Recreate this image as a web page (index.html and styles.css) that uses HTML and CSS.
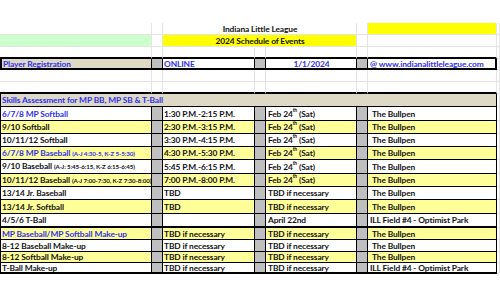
FILE: index.html
```html
<!DOCTYPE html>
<html>
<head>
<meta charset="utf-8">
<link rel="stylesheet" href="styles.css">
</head>
<body>
<div class="sheet">
  <div class="row h12">
    <div class="c"></div><div class="c"></div><div class="c sp-ce center">Indiana Little League</div><div class="c"></div><div class="c yel"></div><div class="c h"></div>
  </div>
  <div class="row h12">
    <div class="c grn"></div><div class="c"></div><div class="c sp-ce yel center">2024 Schedule of Events</div><div class="c"></div><div class="c"></div><div class="c h"></div>
  </div>
  <div class="row h12 thick-below">
    <div class="c"></div><div class="c"></div><div class="c"></div><div class="c"></div><div class="c"></div><div class="c"></div><div class="c"></div><div class="c h"></div>
  </div>
  <div class="row h11 reg thick-below">
    <div class="c tan blue first">Player Registration</div><div class="c gry"></div><div class="c blue">ONLINE</div><div class="c gry"></div><div class="c blue center">1/1/2024</div><div class="c gry"></div><div class="c blue loc last">@ www.indianalittleleague.com</div><div class="c h"></div>
  </div>
  <div class="row h12">
    <div class="c"></div><div class="c"></div><div class="c"></div><div class="c"></div><div class="c"></div><div class="c"></div><div class="c"></div><div class="c h"></div>
  </div>
  <div class="row h12 thick-below">
    <div class="c"></div><div class="c"></div><div class="c"></div><div class="c"></div><div class="c"></div><div class="c"></div><div class="c"></div><div class="c h"></div>
  </div>
  <div class="row h13 data">
    <div class="c sp-all tan blue first last">Skills Assessment for MP BB, MP SB &amp; T-Ball</div><div class="c h"></div>
  </div>

  <div class="row h14 data">
    <div class="c blue first">6/7/8 MP Softball</div><div class="c gry"></div><div class="c">1:30 P.M.-2:15 P.M.</div><div class="c gry"></div><div class="c dt"><span>Feb 24<sup>th</sup> (Sat)</span></div><div class="c gry"></div><div class="c loc ind last">The Bullpen</div><div class="c h"></div>
  </div>
  <div class="row h13 data ly">
    <div class="c first">9/10 Softball</div><div class="c gry"></div><div class="c">2:30 P.M.-3:15 P.M.</div><div class="c gry"></div><div class="c dt"><span>Feb 24<sup>th</sup> (Sat)</span></div><div class="c gry"></div><div class="c loc ind last">The Bullpen</div><div class="c h"></div>
  </div>
  <div class="row h13 data">
    <div class="c first">10/11/12 Softball</div><div class="c gry"></div><div class="c">3:30 P.M.-4:15 P.M.</div><div class="c gry"></div><div class="c dt"><span>Feb 24<sup>th</sup> (Sat)</span></div><div class="c gry"></div><div class="c loc ind last">The Bullpen</div><div class="c h"></div>
  </div>
  <div class="row h13 data ly">
    <div class="c blue first"><span>6/7/8 MP Baseball <small>(A-J 4:30-5, K-Z 5-5:30)</small></span></div><div class="c gry"></div><div class="c">4:30 P.M.-5:30 P.M.</div><div class="c gry"></div><div class="c dt"><span>Feb 24<sup>th</sup> (Sat)</span></div><div class="c gry"></div><div class="c loc ind last">The Bullpen</div><div class="c h"></div>
  </div>
  <div class="row h14 data">
    <div class="c first"><span>9/10 Baseball <small>(A-J: 5:45-6:15, K-Z 6:15-6:45)</small></span></div><div class="c gry"></div><div class="c">5:45 P.M.-6:15 P.M.</div><div class="c gry"></div><div class="c dt"><span>Feb 24<sup>th</sup> (Sat)</span></div><div class="c gry"></div><div class="c loc ind last">The Bullpen</div><div class="c h"></div>
  </div>
  <div class="row h13 data ly">
    <div class="c first"><span>10/11/12 Baseball <small>(A-J 7:00-7:30, K-Z 7:30-8:00)</small></span></div><div class="c gry"></div><div class="c">7:00 P.M.-8:00 P.M.</div><div class="c gry"></div><div class="c dt"><span>Feb 24<sup>th</sup> (Sat)</span></div><div class="c gry"></div><div class="c loc ind last">The Bullpen</div><div class="c h"></div>
  </div>
  <div class="row h13 data">
    <div class="c first">13/14 Jr. Baseball</div><div class="c gry"></div><div class="c">TBD</div><div class="c gry"></div><div class="c dt">TBD if necessary</div><div class="c gry"></div><div class="c loc ind last">The Bullpen</div><div class="c h"></div>
  </div>
  <div class="row h14 data ly">
    <div class="c first">13/14 Jr. Softball</div><div class="c gry"></div><div class="c">TBD</div><div class="c gry"></div><div class="c dt">TBD if necessary</div><div class="c gry"></div><div class="c loc ind last">The Bullpen</div><div class="c h"></div>
  </div>
  <div class="row h14 data thick-below">
    <div class="c first">4/5/6 T-Ball</div><div class="c gry"></div><div class="c"></div><div class="c gry"></div><div class="c dt">April 22nd</div><div class="c gry"></div><div class="c loc last">ILL Field #4 - Optimist Park</div><div class="c h"></div>
  </div>
  <div class="row h12 data ly">
    <div class="c blue first">MP Baseball/MP Softball Make-up</div><div class="c gry"></div><div class="c">TBD if necessary</div><div class="c gry"></div><div class="c dt">TBD if necessary</div><div class="c gry"></div><div class="c loc ind last">The Bullpen</div><div class="c h"></div>
  </div>
  <div class="row h12 data">
    <div class="c first">8-12 Baseball Make-up</div><div class="c gry"></div><div class="c">TBD if necessary</div><div class="c gry"></div><div class="c dt">TBD if necessary</div><div class="c gry"></div><div class="c loc ind last">The Bullpen</div><div class="c h"></div>
  </div>
  <div class="row h11 data ly">
    <div class="c first">8-12 Softball Make-up</div><div class="c gry"></div><div class="c">TBD if necessary</div><div class="c gry"></div><div class="c dt">TBD if necessary</div><div class="c gry"></div><div class="c loc ind last">The Bullpen</div><div class="c h"></div>
  </div>
  <div class="row h11 data thick-below">
    <div class="c first">T-Ball Make-up</div><div class="c gry"></div><div class="c">TBD if necessary</div><div class="c gry"></div><div class="c dt">TBD if necessary</div><div class="c gry"></div><div class="c loc last">ILL Field #4 - Optimist Park</div><div class="c h"></div>
  </div>
</div>
</body>
</html>
```
FILE: styles.css
```css
html, body {
  margin: 0;
  padding: 0;
  background: #ffffff;
}
body {
  font-family: Lato, "Liberation Sans", sans-serif;
  font-weight: 700;
  font-size: 8.4px;
  letter-spacing: -0.12px;
  color: #111111;
}
.sheet {
  display: flex;
  flex-direction: column;
  padding-top: 23px;
  width: 500px;
}
.row {
  display: grid;
  grid-template-columns: 152px 11px 92px 11px 91px 11px 129px 1fr;
}
.h11 { height: 11px; }
.h12 { height: 12px; }
.h13 { height: 13px; }
.h14 { height: 14px; }

.c {
  box-sizing: border-box;
  border-right: 1px solid #e4e4e4;
  border-bottom: 1px solid #e4e4e4;
  display: flex;
  align-items: center;
  padding: 0 0 0 1px;
  white-space: nowrap;
  overflow: hidden;
  line-height: 10px;
}
.sp-ce { grid-column: 3 / 6; }
.sp-all { grid-column: 1 / 8; }
.center { justify-content: center; }

.yel { background: #ffff00; }
.grn { background: #ccffcc; }
.tan { background: #ddd9c4; }
.gry { background: #bfbfbf; }
.blue { color: #2f2fee; }

.data .c:not(.h),
.reg .c:not(.h) {
  border-right-color: #000;
  border-bottom-color: #000;
}
.data .c.first,
.reg .c.first {
  border-left: 1px solid #000;
}
.reg .c.first { border-left-width: 2px; }
.reg .c.last { border-right-width: 2px; }
.reg .c:not(.h) { background-color: #fff; }
.reg .c.tan { background-color: #ddd9c4; }
.reg .c.gry { background-color: #bfbfbf; }

.thick-below .c:not(.h) {
  border-bottom: 2px solid #000;
}

.ly .c:not(.gry):not(.h) { background: #ffff99; }
.data .c.tan { background: #ddd9c4; }

.dt { padding-left: 2px; }
.loc { padding-left: 2px; }
.ind { padding-left: 4px; }

small {
  font-size: 6.2px;
  letter-spacing: -0.1px;
}
sup {
  font-size: 5px;
  line-height: 0;
  position: relative;
  top: -1px;
  vertical-align: super;
}
```
